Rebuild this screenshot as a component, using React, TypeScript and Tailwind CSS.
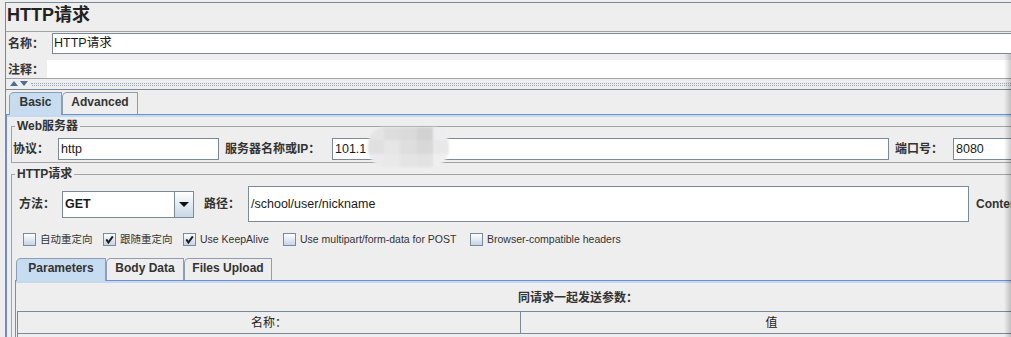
import React from 'react';

const font = "font-['Liberation_Sans','Noto_Sans_CJK_SC',sans-serif]";

function Check({ checked, label, width }: { checked?: boolean; label: string; width: string }) {
  return (
    <div className={`flex items-center gap-[4px] ${width}`}>
      <span className="flex h-[13px] w-[13px] shrink-0 items-center justify-center border border-[#7a8a99] bg-linear-to-b from-white to-[#c6d4e6]">
        {checked && (
          <svg width="9" height="9" viewBox="0 0 9 9">
            <path d="M1.3 4.4 L3.4 7.5 L7.8 1.3" fill="none" stroke="#1e1e1e" strokeWidth="2" />
          </svg>
        )}
      </span>
      <span className="whitespace-nowrap text-[10.5px] text-[#333]">{label}</span>
    </div>
  );
}

function Tab({ label, active, width }: { label: string; active?: boolean; width: string }) {
  const state = active
    ? 'relative z-10 -mb-px h-[23px] bg-[#c8dcf1] pb-[4px]'
    : 'h-[22px] bg-[#eeeeee] pb-[3px]';
  return (
    <div
      className={`flex items-center justify-center rounded-tl-[5px] border border-b-0 border-[#8e9db3] text-[12px] font-bold text-[#333] ${state} ${width}`}
    >
      {label}
    </div>
  );
}

function Field({ width, children, bold }: { width: string; children?: React.ReactNode; bold?: boolean }) {
  return (
    <div
      className={`relative flex h-[22px] items-center border border-[#7a8a99] bg-white pl-[2px] text-[12.5px] text-[#1a1a1a] ${bold ? 'font-bold' : ''} ${width}`}
    >
      {children}
    </div>
  );
}

const blurTiles = [
  '#e4e4e4', '#dddddd', '#dadada', '#d2d2d2', '#ededf0',
  '#e0e0e0', '#e6e6e6', '#dedede', '#d8d8d8', '#e8e8e8',
  '#ebebeb', '#e9e9e9', '#e4e4e4', '#e2e2e2', '#efefef',
];

export default function App() {
  return (
    <div className={`relative h-[337px] w-[1011px] overflow-hidden bg-[#eeeeee] text-[#333] ${font}`}>
      <div className="pl-[5px] pt-[2px]">
        <div className="w-[1150px] border-l border-t border-[#7a8a99]">
          {/* title */}
          <div className="h-[28px] pl-[1px] pt-[3px] text-[18px] font-bold leading-[18px] text-[#222]">HTTP请求</div>

          {/* name / comment */}
          <div className="border-t border-[#a3a3a3] pt-[1px]">
            <div className="flex h-[21px] items-center">
              <span className="w-[46px] pl-[2px] text-[12px] font-bold">名称：</span>
              <div className="flex h-full flex-1 items-center border border-r-0 border-[#7a8a99] bg-white pl-[1px] text-[12.5px] text-[#1a1a1a]">
                HTTP请求
              </div>
            </div>
            <div className="mt-[6px] flex h-[18px] items-center">
              <span className="w-[41px] pl-[2px] pt-[1px] text-[12px] font-bold">注释：</span>
              <div className="h-full flex-1 bg-white" />
            </div>
          </div>
          <div className="border-t border-[#a3a3a3]" />

          {/* splitter */}
          <div className="flex h-[10px] items-start gap-[3px] pl-[4px] pt-[2px]">
            <svg width="18" height="5" viewBox="0 0 18 5" className="shrink-0">
              <path d="M0 5 L4 0 L8 5 Z" fill="#4d6b96" />
              <path d="M10 0 L18 0 L14 5 Z" fill="#4d6b96" />
            </svg>
            <div className="mt-[2px] flex flex-1 flex-col gap-[1px]">
              <div className="border-t border-dotted border-[#9aa6b4]" />
              <div className="ml-px border-t border-dotted border-[#9aa6b4]" />
            </div>
          </div>
          <div className="border-t border-[#7a8a99]" />

          {/* main tabs */}
          <div className="flex items-end pl-[3px] pt-[2px]">
            <Tab label="Basic" active width="w-[53px]" />
            <Tab label="Advanced" width="w-[76px]" />
          </div>
          <div className="border-l border-t border-[#6f8fcf]">
            <div className="h-[2px] bg-[#c6d8ee]" />

            {/* web server */}
            <fieldset className="ml-[4px] mt-[2px] border border-r-0 border-[#a3a3a3] pb-[2px]">
              <legend className="ml-[3px] px-[2px] text-[12px] font-bold leading-[14px]">Web服务器</legend>
              <div className="flex items-center pt-[5px]">
                <span className="w-[46px] pl-[1px] text-[12px] font-bold">协议：</span>
                <Field width="w-[161px]">http</Field>
                <span className="w-[113px] pl-[6px] text-[12px] font-bold">服务器名称或IP：</span>
                <Field width="w-[557px]">
                  101.1
                  <div className="absolute left-[35px] top-[-12px] grid h-[40px] w-[81px] grid-cols-5 overflow-hidden rounded-[18px] blur-[1px]">
                    {blurTiles.map((c, i) => (
                      <div key={i} style={{ backgroundColor: c }} />
                    ))}
                  </div>
                </Field>
                <span className="w-[64px] pl-[6px] text-[12px] font-bold">端口号：</span>
                <Field width="w-[120px]">8080</Field>
              </div>
            </fieldset>

            {/* http request */}
            <fieldset className="ml-[4px] mt-[4px] border border-r-0 border-b-0 border-[#a3a3a3]">
              <legend className="ml-[3px] px-[2px] text-[12px] font-bold leading-[14px]">HTTP请求</legend>
              <div className="mt-[5px] flex h-[36px] items-center">
                <span className="w-[50px] pl-[7px] text-[12px] font-bold">方法：</span>
                <div className="flex h-[27px] w-[132px] border border-[#7a8a99]">
                  <div className="flex flex-1 items-center bg-white pl-[2px] text-[12.5px] font-bold text-[#1a1a1a]">GET</div>
                  <div className="flex w-[19px] items-center justify-center border-l border-[#7a8a99] bg-linear-to-b from-white to-[#c9d7e8]">
                    <svg width="10" height="5" viewBox="0 0 10 5">
                      <path d="M0 0 L10 0 L5 5 Z" fill="#111" />
                    </svg>
                  </div>
                </div>
                <span className="w-[54px] pl-[10px] text-[12px] font-bold">路径：</span>
                <div className="flex h-[36px] w-[721px] items-center border border-[#7a8a99] bg-white pl-[2px] text-[12.5px] text-[#1a1a1a]">
                  /school/user/nickname
                </div>
                <span className="ml-[7px] whitespace-nowrap text-[12px] font-bold">Content encoding：</span>
              </div>

              <div className="mt-[11px] flex h-[13px] items-center pl-[11px]">
                <Check label="自动重定向" width="w-[80px]" />
                <Check label="跟随重定向" checked width="w-[80px]" />
                <Check label="Use KeepAlive" checked width="w-[100px]" />
                <Check label="Use multipart/form-data for POST" width="w-[187px]" />
                <Check label="Browser-compatible headers" width="w-[200px]" />
              </div>

              {/* parameter tabs */}
              <div className="ml-[3px] mt-[12px]">
                <div className="flex items-end pl-[1px]">
                  <Tab label="Parameters" active width="w-[90px]" />
                  <Tab label="Body Data" width="w-[78px]" />
                  <Tab label="Files Upload" width="w-[88px]" />
                </div>
                <div className="border-l border-t border-[#6f8fcf]">
                  <div className="h-[2px] bg-[#c6d8ee]" />
                  <div className="w-[1124px] pt-[8px] text-center text-[12px] font-bold leading-[14px]">同请求一起发送参数：</div>
                  <div className="ml-px mt-[6px] border-l border-t border-[#7a8a99]">
                    <div className="flex h-[22px] border-b border-[#7a8a99] text-[12px] text-[#222]">
                      <div className="flex w-[503px] items-center justify-center border-r border-[#7a8a99]">名称：</div>
                      <div className="flex w-[502px] items-center justify-center border-r border-[#7a8a99]">值</div>
                    </div>
                    <div className="h-[20px]" />
                  </div>
                </div>
              </div>
            </fieldset>
          </div>
        </div>
      </div>
      <div className="absolute bottom-0 right-0 top-[54px] w-[7px] bg-linear-to-r from-black/0 to-black/20" />
    </div>
  );
}
